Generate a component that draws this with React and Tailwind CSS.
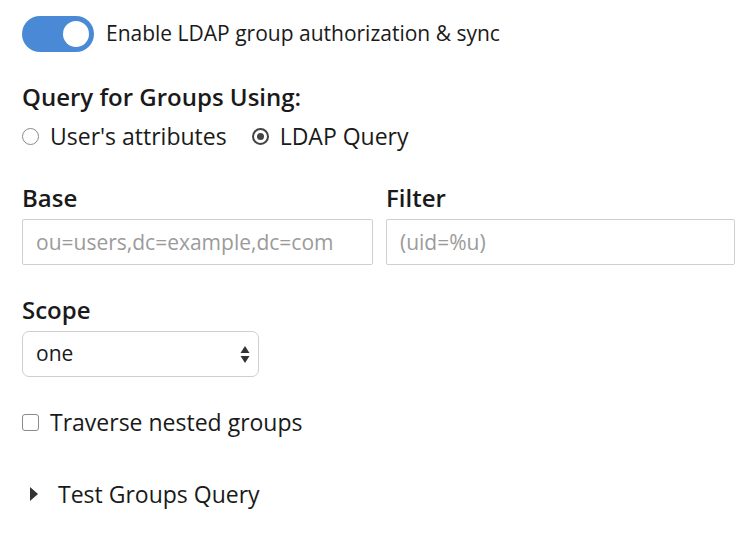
export default function App() {
  return (
    <div className="min-h-[540px] w-[756px] bg-white pl-[22px] pr-[21px] pt-[16px] font-['Open_Sans',sans-serif] text-[#1a1a1a]">
      <div className="flex items-center gap-3">
        <div className="flex h-[36px] w-[72px] items-center justify-end rounded-full bg-[#4a89d6] pr-[5px]">
          <div className="h-[26px] w-[26px] rounded-full bg-white" />
        </div>
        <span className="text-[21px]">Enable LDAP group authorization &amp; sync</span>
      </div>

      <h3 className="mt-[29px] text-[24px] font-semibold leading-[32px]">Query for Groups Using:</h3>
      <div className="mt-[7px] flex items-center text-[23px] leading-[32px]">
        <label className="flex items-center">
          <span className="h-[17px] w-[17px] rounded-full border border-[#8a8a8a] bg-white" />
          <span className="ml-[11px]">User's attributes</span>
        </label>
        <label className="ml-[25px] flex items-center">
          <span className="flex h-[17px] w-[17px] items-center justify-center rounded-full border-[2px] border-[#444]">
            <span className="h-[7px] w-[7px] rounded-full bg-[#444]" />
          </span>
          <span className="ml-[11px]">LDAP Query</span>
        </label>
      </div>

      <div className="mt-[30px] grid grid-cols-[351px_349px] gap-x-[13px]">
        <div>
          <div className="text-[24px] font-semibold leading-[32px]">Base</div>
          <input
            className="mt-[5px] h-[46px] w-full rounded-[2px] border border-[#cfcfcf] px-[13px] text-[21px] text-[#1a1a1a] placeholder:text-[#9b9b9b] outline-none"
            placeholder="ou=users,dc=example,dc=com"
          />
        </div>
        <div>
          <div className="text-[24px] font-semibold leading-[32px]">Filter</div>
          <input
            className="mt-[5px] h-[46px] w-full rounded-[2px] border border-[#cfcfcf] px-[13px] text-[21px] text-[#1a1a1a] placeholder:text-[#9b9b9b] outline-none"
            placeholder="(uid=%u)"
          />
        </div>
      </div>

      <div className="mt-[29px] text-[24px] font-semibold leading-[32px]">Scope</div>
      <div className="mt-[5px] flex h-[46px] w-[237px] items-center justify-between rounded-[7px] border border-[#cfcfcf] pl-[13px] pr-[8px]">
        <span className="text-[21px]">one</span>
        <svg width="10" height="20" viewBox="0 0 10 20" className="text-[#333]">
          <path d="M5 2 L9.5 9 H0.5 Z" fill="currentColor" />
          <path d="M5 19 L9.5 12 H0.5 Z" fill="currentColor" />
        </svg>
      </div>

      <label className="mt-[29px] flex items-center text-[23px] leading-[32px]">
        <span className="h-[17px] w-[17px] rounded-[3px] border border-[#8a8a8a] bg-white" />
        <span className="ml-[11px]">Traverse nested groups</span>
      </label>

      <div className="mt-[40px] flex items-center text-[23px] leading-[32px]">
        <svg width="8" height="14" viewBox="0 0 8 14" className="ml-[8px] text-[#333]">
          <path d="M0 0 L8 7 L0 14 Z" fill="currentColor" />
        </svg>
        <span className="ml-[20px]">Test Groups Query</span>
      </div>
    </div>
  );
}
